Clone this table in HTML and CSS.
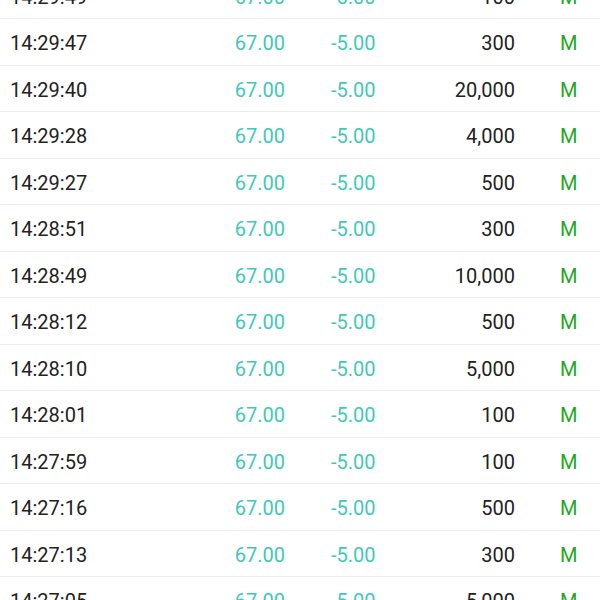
FILE: index.html
```html
<html><head>
    <link rel="stylesheet" href="styles.css">
</head><body>
    <div class="trades">
        <div class="row"><span class="time">14:29:49</span><span class="price">67.00</span><span class="change">-5.00</span><span class="vol">100</span><span class="side">M</span></div>
        <div class="row"><span class="time">14:29:47</span><span class="price">67.00</span><span class="change">-5.00</span><span class="vol">300</span><span class="side">M</span></div>
        <div class="row"><span class="time">14:29:40</span><span class="price">67.00</span><span class="change">-5.00</span><span class="vol">20,000</span><span class="side">M</span></div>
        <div class="row"><span class="time">14:29:28</span><span class="price">67.00</span><span class="change">-5.00</span><span class="vol">4,000</span><span class="side">M</span></div>
        <div class="row"><span class="time">14:29:27</span><span class="price">67.00</span><span class="change">-5.00</span><span class="vol">500</span><span class="side">M</span></div>
        <div class="row"><span class="time">14:28:51</span><span class="price">67.00</span><span class="change">-5.00</span><span class="vol">300</span><span class="side">M</span></div>
        <div class="row"><span class="time">14:28:49</span><span class="price">67.00</span><span class="change">-5.00</span><span class="vol">10,000</span><span class="side">M</span></div>
        <div class="row"><span class="time">14:28:12</span><span class="price">67.00</span><span class="change">-5.00</span><span class="vol">500</span><span class="side">M</span></div>
        <div class="row"><span class="time">14:28:10</span><span class="price">67.00</span><span class="change">-5.00</span><span class="vol">5,000</span><span class="side">M</span></div>
        <div class="row"><span class="time">14:28:01</span><span class="price">67.00</span><span class="change">-5.00</span><span class="vol">100</span><span class="side">M</span></div>
        <div class="row"><span class="time">14:27:59</span><span class="price">67.00</span><span class="change">-5.00</span><span class="vol">100</span><span class="side">M</span></div>
        <div class="row"><span class="time">14:27:16</span><span class="price">67.00</span><span class="change">-5.00</span><span class="vol">500</span><span class="side">M</span></div>
        <div class="row"><span class="time">14:27:13</span><span class="price">67.00</span><span class="change">-5.00</span><span class="vol">300</span><span class="side">M</span></div>
        <div class="row"><span class="time">14:27:05</span><span class="price">67.00</span><span class="change">-5.00</span><span class="vol">5,000</span><span class="side">M</span></div>
    </div>
</body></html>
```
FILE: styles.css
```css
body {
    margin: 0;
    background: #fff;
    font-family: Roboto, "Noto Sans", sans-serif;
    overflow: hidden;
}

.trades {
    margin-top: -27.5px;
}

.row {
    display: grid;
    grid-template-columns: 140px 135px 145px 85px 1fr;
    align-items: center;
    height: 46.5px;
    box-sizing: border-box;
    padding: 3px 0 0 10px;
    border-bottom: 1px solid #ededed;
    font-size: 20px;
    color: #222;
}

.price {
    text-align: right;
    color: #3fc9b8;
}

.change {
    padding-left: 46px;
    color: #3fc9b8;
}

.vol {
    text-align: right;
}

.side {
    padding-left: 45px;
    color: #1fa81f;
}
```
